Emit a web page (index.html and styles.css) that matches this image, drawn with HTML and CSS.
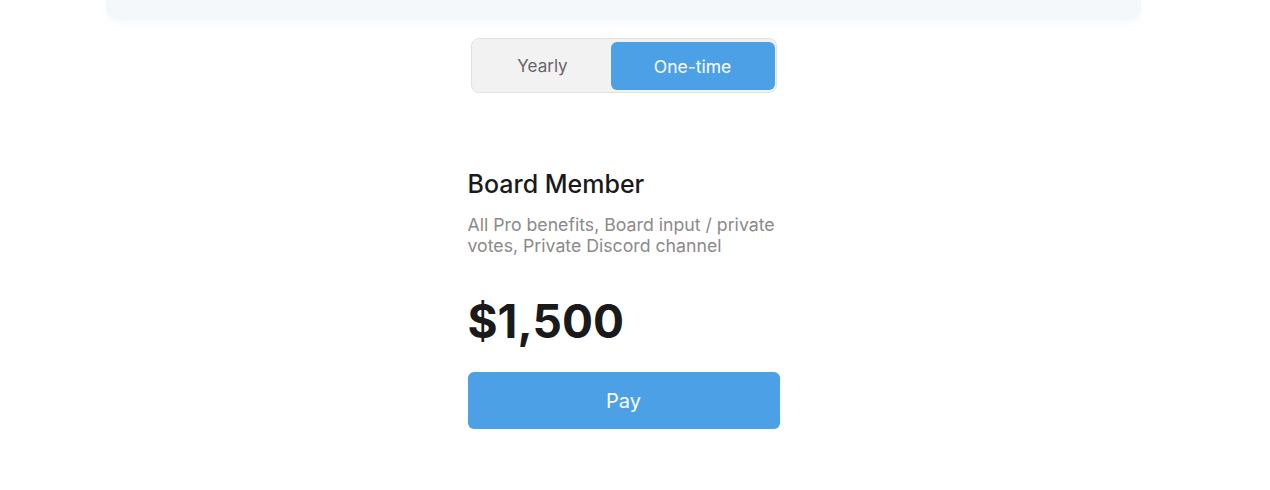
FILE: index.html
```html
<!DOCTYPE html>
<html>
<head>
<meta charset="utf-8">
<link rel="stylesheet" href="styles.css">
</head>
<body>
<div class="page">
  <div class="topbar"></div>
  <div class="toggle-wrap">
    <div class="toggle">
      <button class="seg">Yearly</button>
      <button class="seg active">One-time</button>
    </div>
  </div>
  <div class="plan">
    <h2 class="plan-title">Board Member</h2>
    <p class="plan-desc">All Pro benefits, Board input / private votes, Private Discord channel</p>
    <div class="price">$1,500</div>
    <button class="pay">Pay</button>
  </div>
</div>
</body>
</html>
```
FILE: styles.css
```css
html, body {
  margin: 0;
  padding: 0;
  background: #ffffff;
  font-family: Inter, "Noto Sans", sans-serif;
}
.page {
  width: 1247px;
  display: flex;
  flex-direction: column;
  align-items: center;
}
.topbar {
  align-self: stretch;
  margin: 0 106px;
  height: 20px;
  background: #f5f8fb;
  border-radius: 0 0 12px 12px;
  box-shadow: 0 3px 6px rgba(230, 238, 245, 0.35);
}
.toggle-wrap {
  margin-top: 18px;
}
.toggle {
  display: flex;
  width: 306px;
  height: 55px;
  box-sizing: border-box;
  padding: 3px 1px 2px 3px;
  background: #f2f2f2;
  border: 1px solid #e2e2e2;
  border-radius: 8px;
}
.seg {
  flex: 0 0 136px;
  border: 0;
  background: transparent;
  font-family: Inter, sans-serif;
  font-size: 17px;
  color: #666666;
  border-radius: 6px;
  padding: 0;
}
.seg.active {
  flex: 1;
  background: #4ca1e6;
  color: #ffffff;
  font-size: 17.5px;
}
.plan {
  width: 312px;
  margin-top: 76px;
}
.plan-title {
  margin: 0;
  font-size: 25px;
  font-weight: 500;
  color: #1a1a1a;
  line-height: 30px;
}
.plan-desc {
  margin: 15px 0 0;
  font-size: 17.7px;
  line-height: 21px;
  color: #8a8a8a;
}
.price {
  margin-top: 37px;
  font-size: 46px;
  font-weight: 700;
  color: #1a1a1a;
  line-height: 56px;
}
.pay {
  display: block;
  width: 100%;
  height: 57px;
  margin-top: 23px;
  border: 0;
  border-radius: 6px;
  background: #4ca1e6;
  color: #ffffff;
  font-family: Inter, sans-serif;
  font-size: 20px;
}
```
